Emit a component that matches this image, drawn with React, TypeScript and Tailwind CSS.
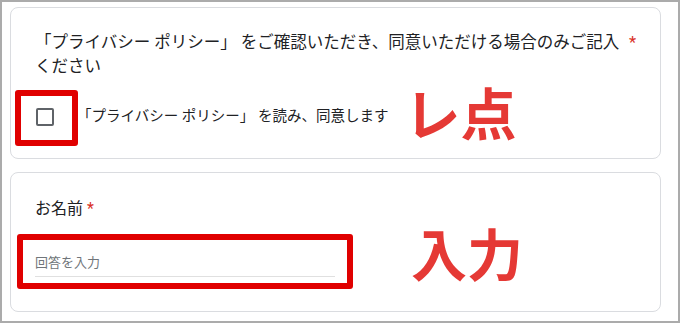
const font = { fontFamily: '"Roboto", "Noto Sans CJK JP", sans-serif' };

function Card({ children, className }: { children: React.ReactNode; className?: string }) {
  return (
    <div className={`relative rounded-lg border border-[#dadce0] bg-white ${className ?? ''}`}>{children}</div>
  );
}

export default function App() {
  return (
    <div
      className="w-[680px] h-[323px] border-2 border-[#ababab] bg-white pl-2 pr-[17px] pt-[5px] flex flex-col gap-[13px] overflow-hidden"
      style={font}
    >
      {/* 同意チェック */}
      <Card className="h-[152px] pl-6 pr-6 pt-[23px]">
        <div className="flex text-[16.5px] leading-6 text-[#202124]">
          <p className="flex-1">
            「プライバシー ポリシー」 をご確認いただき、同意いただける場合のみご記入ください
          </p>
          <span className="text-[#d93025] ml-2">*</span>
        </div>
        <div className="mt-[26px] flex items-center h-[24px]">
          <span className="ml-[1px] w-[18px] h-[18px] rounded-[2px] border-2 border-[#5f6368]" />
          <span className="ml-[23px] text-[14.5px] text-[#202124]">「プライバシー ポリシー」 を読み、同意します</span>
          <span className="ml-[16px] -mt-[2px] text-[56px] font-bold leading-none text-[#e53935]">レ点</span>
        </div>
        <div className="absolute left-[4px] top-[82px] w-[63px] h-[56px] border-[6px] border-[#e00000] rounded-[3px]" />
      </Card>

      {/* お名前 */}
      <Card className="h-[140px] pl-6 pr-6 pt-[24px]">
        <div className="text-[16px] leading-6 text-[#202124]">
          お名前 <span className="text-[#d93025]">*</span>
        </div>
        <div className="flex items-start mt-[32px]">
          <div className="w-[300px] border-b border-[#e0e0e0] pb-[3px] text-[13px] leading-5 text-[#70757a]">回答を入力</div>
          <span className="ml-[76px] -mt-[24px] text-[56px] font-bold leading-none text-[#e53935]">入力</span>
        </div>
        <div className="absolute left-[6px] top-[61px] w-[336px] h-[55px] border-[6px] border-[#e00000] rounded-[3px]" />
      </Card>
    </div>
  );
}
